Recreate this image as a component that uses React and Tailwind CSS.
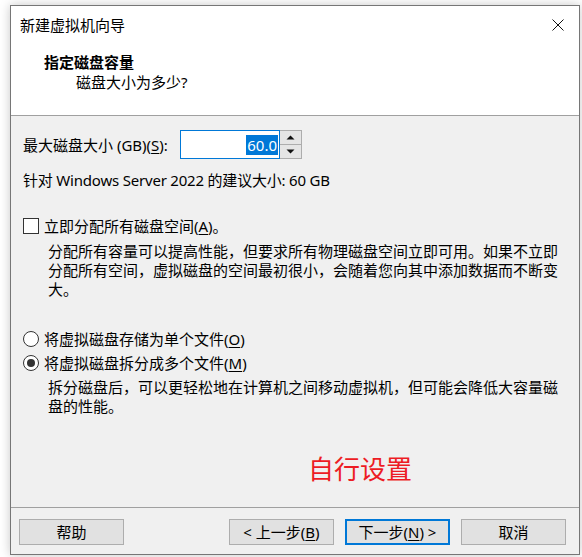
import React from 'react';

const font = { fontFamily: '"Noto Sans", "Noto Sans CJK SC", sans-serif' };

const Key = ({ children }) => <span className="underline underline-offset-2">{children}</span>;

const Button = ({ children, primary, className = '' }) => (
  <button
    className={`h-[26px] w-[105px] bg-[#e1e1e1] text-[15px] leading-none text-black flex items-center justify-center ${
      primary ? 'border-2 border-[#0078d7]' : 'border border-[#adadad]'
    } ${className}`}
  >
    {children}
  </button>
);

const Triangle = ({ up }) => (
  <svg width="9" height="5" viewBox="0 0 9 5">
    {up ? <path d="M0.5 4.5 L4.5 0.5 L8.5 4.5 Z" fill="#111" /> : <path d="M0.5 0.5 L4.5 4.5 L8.5 0.5 Z" fill="#111" />}
  </svg>
);

export default function App() {
  return (
    <div className="w-[582px] h-[557px] bg-white overflow-hidden text-black" style={font}>
      <div className="ml-[10px] mt-[5px] w-[570px] h-[550px] border border-[#767676] bg-[#f0f0f0] flex flex-col shadow-[0_0_10px_rgba(0,0,0,0.22)]">
        {/* Title bar */}
        <div className="h-[38px] shrink-0 bg-white flex items-center justify-between pl-[9px] pr-[15px]">
          <span className="text-[15px] leading-5">新建虚拟机向导</span>
          <svg width="12" height="12" viewBox="0 0 12 12">
            <path d="M0.5 0.5 L11.5 11.5 M11.5 0.5 L0.5 11.5" stroke="#111" strokeWidth="1" />
          </svg>
        </div>

        {/* Header */}
        <div className="h-[72px] shrink-0 bg-white pt-[8px] pl-[33px] border-b border-[#a0a0a0]">
          <div className="text-[15px] leading-5 font-bold">指定磁盘容量</div>
          <div className="text-[15px] leading-5 pl-[32px]">磁盘大小为多少?</div>
        </div>

        {/* Content */}
        <div className="h-[391px] shrink-0 pl-[12px] pt-[14px] text-[15px]">
          <div className="flex items-center h-[29px]">
            <div className="w-[157px] leading-5">
              最大磁盘大小 (GB)(<Key>S</Key>):
            </div>
            <div className="w-[100px] h-[29px] border border-[#0078d7] bg-white flex items-center justify-end pr-[1px]">
              <span className="bg-[#0078d7] text-white leading-5 px-[1px]">60.0</span>
            </div>
            <div className="w-[22px] h-[29px] border border-[#adadad] border-l-0 flex flex-col bg-[#f0f0f0]">
              <div className="flex-1 border-b border-[#adadad] flex items-center justify-center bg-[#e5e5e5]">
                <Triangle up />
              </div>
              <div className="flex-1 flex items-center justify-center bg-[#e5e5e5]">
                <Triangle />
              </div>
            </div>
          </div>

          <div className="mt-[11px] leading-5 tracking-[-0.2px]">针对 Windows Server 2022 的建议大小: 60 GB</div>

          <div className="mt-[26px] h-5 flex items-center">
            <div className="w-4 h-4 border border-[#333] bg-white" />
            <span className="ml-[5px] leading-5">
              立即分配所有磁盘空间(<Key>A</Key>)。
            </span>
          </div>

          <div className="mt-[6px] pl-[25px] leading-[19px] whitespace-nowrap">
            <div>分配所有容量可以提高性能，但要求所有物理磁盘空间立即可用。如果不立即</div>
            <div>分配所有空间，虚拟磁盘的空间最初很小，会随着您向其中添加数据而不断变</div>
            <div>大。</div>
          </div>

          <div className="mt-[30px] h-5 flex items-center">
            <div className="w-4 h-4 rounded-full border border-[#333] bg-white" />
            <span className="ml-[5px] leading-5">
              将虚拟磁盘存储为单个文件(<Key>O</Key>)
            </span>
          </div>

          <div className="mt-[4px] h-5 flex items-center">
            <div className="w-4 h-4 rounded-full border border-[#333] bg-white flex items-center justify-center">
              <div className="w-2 h-2 rounded-full bg-[#333]" />
            </div>
            <span className="ml-[5px] leading-5">
              将虚拟磁盘拆分成多个文件(<Key>M</Key>)
            </span>
          </div>

          <div className="mt-[5px] pl-[25px] leading-[19px] whitespace-nowrap">
            <div>拆分磁盘后，可以更轻松地在计算机之间移动虚拟机，但可能会降低大容量磁</div>
            <div>盘的性能。</div>
          </div>

          <div className="mt-[38px] pl-[285px] text-[26px] leading-[30px] text-[#ed1c24]">自行设置</div>
        </div>

        {/* Footer */}
        <div className="h-[47px] shrink-0 border-t border-[#a0a0a0] pt-[11px] pl-[8px] flex">
          <Button>帮助</Button>
          <Button className="ml-[105px]">
            &lt; 上一步(<Key>B</Key>)
          </Button>
          <Button primary className="ml-[11px]">
            下一步(<Key>N</Key>) &gt;
          </Button>
          <Button className="ml-[11px]">取消</Button>
        </div>
      </div>
    </div>
  );
}
